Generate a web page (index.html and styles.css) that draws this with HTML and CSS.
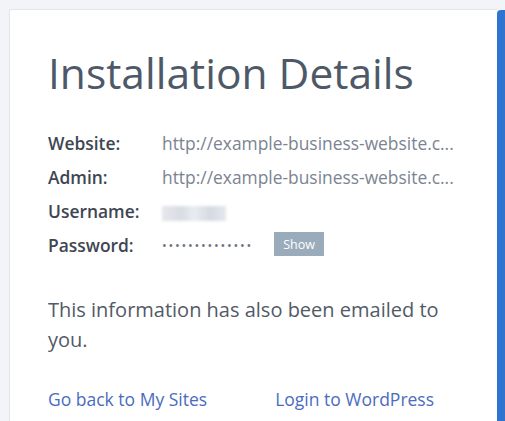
FILE: index.html
```html
<!DOCTYPE html>
<html>
<head>
<meta charset="utf-8">
<link rel="stylesheet" href="styles.css">
</head>
<body>
<div class="page">
  <div class="card">
    <h1 class="title">Installation Details</h1>
    <div class="details">
      <div class="label">Website:</div>
      <div class="value">http://example-business-website.c...</div>
      <div class="label">Admin:</div>
      <div class="value">http://example-business-website.c...</div>
      <div class="label">Username:</div>
      <div class="value"><span class="blur"></span></div>
      <div class="label">Password:</div>
      <div class="value pw"><span class="dots">••••••••••••••</span><button class="show">Show</button></div>
    </div>
    <p class="note">This information has also been emailed to you.</p>
    <div class="links">
      <a class="link" href="#">Go back to My Sites</a>
      <a class="link" href="#">Login to WordPress</a>
    </div>
  </div>
  <div class="side"></div>
</div>
</body>
</html>
```
FILE: styles.css
```css
html, body { margin: 0; padding: 0; }
body {
  background: #f2f4f7;
  font-family: "Open Sans", "Liberation Sans", sans-serif;
  width: 505px;
  height: 421px;
  overflow: hidden;
}
.page {
  display: flex;
  padding: 9px 0 0 9px;
}
.card {
  width: 488px;
  flex: none;
  height: 430px;
  box-sizing: border-box;
  background: #fff;
  border: 1px solid #e2e5e9;
  border-right: none;
  border-radius: 2px 0 0 0;
  padding: 0 0 0 38px;
}
.side {
  flex: none;
  width: 8px;
  height: 430px;
  margin-top: 1px;
  background: #2f74d0;
  border-radius: 4px 0 0 0;
}
.title {
  margin: 35px 0 0 0;
  font-size: 42.5px;
  font-weight: 400;
  line-height: 56px;
  color: #4e5968;
}
.details {
  margin-top: 25px;
  display: grid;
  grid-template-columns: 114px 300px;
  grid-auto-rows: 34px;
  align-items: center;
}
.label {
  font-size: 17.4px;
  font-weight: 600;
  color: #3e4652;
}
.value {
  font-size: 17.4px;
  color: #7b8491;
  white-space: nowrap;
}
.blur {
  display: inline-block;
  width: 64px;
  height: 15px;
  vertical-align: middle;
  background: linear-gradient(90deg, #e4e7ec, #d8dde4 30%, #e9ecf0 50%, #d5dae2 75%, #e4e7ec);
  filter: blur(1.5px);
}
.pw { display: flex; align-items: center; gap: 21px; }
.dots {
  font-size: 12.5px;
  letter-spacing: 1.8px;
  color: #6a7380;
}
.show {
  font-family: inherit;
  border: none;
  background: #9aabbb;
  color: #fff;
  font-size: 12.5px;
  width: 50px;
  height: 24px;
  padding: 0;
  margin-top: -2px;
}
.note {
  margin: 33px 0 0 0;
  width: 410px;
  font-size: 20px;
  line-height: 30px;
  color: #525a66;
}
.links {
  margin-top: 32px;
  display: flex;
  gap: 68px;
}
.link {
  font-size: 17.5px;
  color: #4a6cc0;
  text-decoration: none;
}
```
